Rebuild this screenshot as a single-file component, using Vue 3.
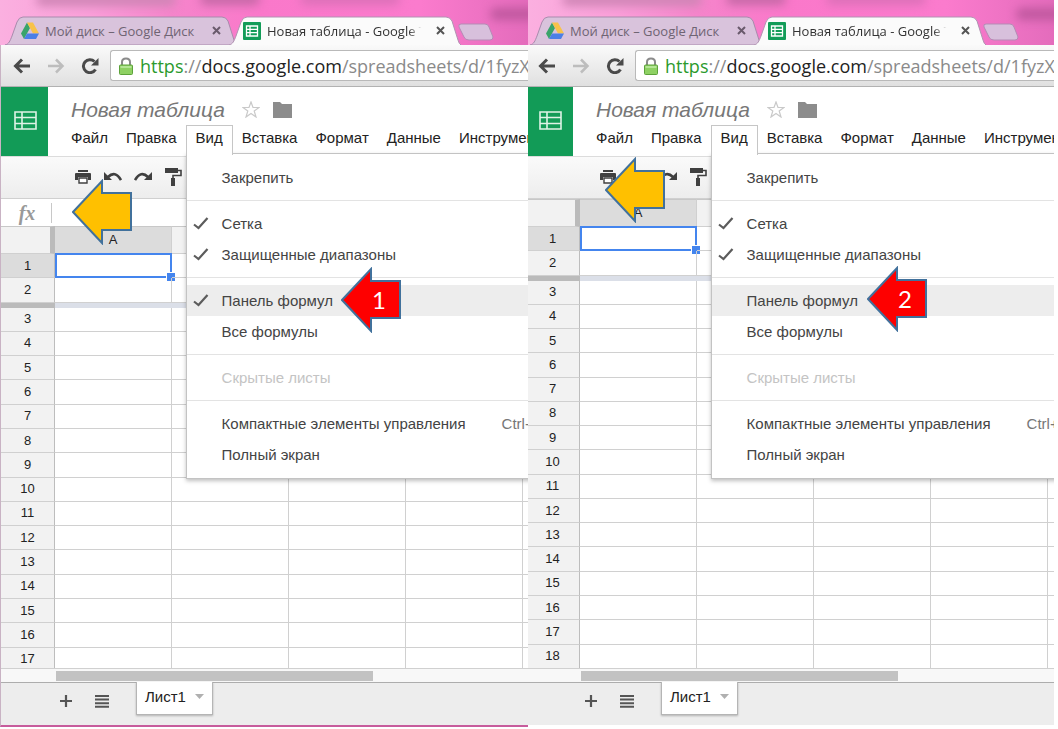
<script setup>
const menusBefore = ['Файл', 'Правка']
const menusAfter = ['Вставка', 'Формат', 'Данные', 'Инструменты']
const columns = ['A', 'B', 'C', 'D', 'E']

const viewMenu = (formulaBar) => [
  { label: 'Закрепить' },
  { separator: true },
  { label: 'Сетка', checked: true },
  { label: 'Защищенные диапазоны', checked: true },
  { separator: true },
  { label: 'Панель формул', checked: formulaBar, active: true },
  { label: 'Все формулы' },
  { separator: true },
  { label: 'Скрытые листы', disabled: true },
  { separator: true },
  { label: 'Компактные элементы управления', shortcut: 'Ctrl+Shift+F' },
  { label: 'Полный экран' },
]

const shots = [
  { step: 1, name: 'first', formulaBar: true, rows: 17, items: viewMenu(true) },
  { step: 2, name: 'second', formulaBar: false, rows: 18, items: viewMenu(false) },
]
</script>

<template>
  <main class="page">
    <section v-for="shot in shots" :key="shot.step" class="shot" :class="shot.name">
      <div class="window">
        <div class="tabstrip">
          <i class="blot b1"></i><i class="blot b2"></i><i class="blot b3"></i><i class="blot b4"></i>
          <div class="tab">
            <svg class="tab-shape" viewBox="0 0 232 29" preserveAspectRatio="none" aria-hidden="true">
              <path d="M0 29 C4 28 5 25 7 20 L12 6 Q14 1 18 1 H217 Q221 1 223 5 L229 24 Q230 28 232 29 Z" fill="#d9c3dc" stroke="#a98bad" />
            </svg>
            <svg class="fav" viewBox="0 0 18 17" aria-hidden="true">
              <path d="M6 0 L0 11 L3 16.500 L9 5.500 Z" fill="#3aa46a" />
              <path d="M6 0 H12 L18 11 H12 Z" fill="#f8c24a" />
              <path d="M6 11 H18 L15 16.500 H3 Z" fill="#4c7fe6" />
            </svg>
            <span class="tab-title">Мой диск – Google Диск</span>
            <button class="close" aria-label="Закрыть вкладку Мой диск">
              <svg viewBox="0 0 9 9"><path d="M1 1 L8 8 M8 1 L1 8" stroke="#6a5a6c" stroke-width="2" /></svg>
            </button>
          </div>
          <div class="tab current">
            <svg class="tab-shape" viewBox="0 0 232 29" preserveAspectRatio="none" aria-hidden="true">
              <path d="M0 29 C4 28 5 25 7 20 L12 6 Q14 1 18 1 H217 Q221 1 223 5 L229 24 Q230 28 232 29 Z" fill="#fbfbfb" />
              <path d="M0 29 C4 28 5 25 7 20 L12 6 Q14 1 18 1 H217 Q221 1 223 5 L229 24 Q230 28 232 29" fill="none" stroke="#b193b2" />
            </svg>
            <svg class="fav" viewBox="0 0 18 18" aria-hidden="true">
              <rect width="18" height="18" rx="1" fill="#129c58" />
              <path d="M3.500 4 H14.500 V14 H3.500 Z M3.500 7.300 H14.500 M3.500 10.600 H14.500 M7 4 V14" fill="none" stroke="#fff" stroke-width="1.300" />
            </svg>
            <span class="tab-title">Новая таблица - Google Таблицы</span>
            <button class="close" aria-label="Закрыть вкладку Новая таблица">
              <svg viewBox="0 0 9 9"><path d="M1 1 L8 8 M8 1 L1 8" stroke="#555" stroke-width="2" /></svg>
            </button>
          </div>
          <button class="new-tab" aria-label="Новая вкладка">
            <svg viewBox="0 0 38 18"><path d="M4 1 H28 Q31 1 32 4 L36 14 Q36 17 33 17 H12 Q8 17 7 14 L2 4 Q1 1 4 1 Z" fill="#d8c0dc" stroke="#b58bb5" /></svg>
          </button>
        </div>

        <div class="navbar">
          <button class="nav" aria-label="Назад">
            <svg viewBox="0 0 18 16"><path d="M17 8 H3 M9 1.500 L2.500 8 L9 14.500" fill="none" stroke="#4a4a4a" stroke-width="3" /></svg>
          </button>
          <button class="nav" aria-label="Вперед">
            <svg viewBox="0 0 18 16"><path d="M1 8 H15 M9 1.500 L15.500 8 L9 14.500" fill="none" stroke="#bdbdbd" stroke-width="2.500" /></svg>
          </button>
          <button class="nav" aria-label="Обновить">
            <svg viewBox="0 0 18 16"><path d="M14.500 11.500 A6.500 6.500 0 1 1 13.500 3.500" fill="none" stroke="#4a4a4a" stroke-width="3" /><path d="M17.500 0 V7.500 H10 Z" fill="#4a4a4a" /></svg>
          </button>
          <div class="address">
            <svg class="lock" viewBox="0 0 14 18" aria-hidden="true">
              <path d="M3 9 V5 Q3 1.500 7 1.500 Q11 1.500 11 5 V9" fill="none" stroke="#8b8b8b" stroke-width="2" />
              <rect x="0.500" y="8" width="13" height="9.500" rx="1" fill="#8ed163" stroke="#5da23b" />
              <path d="M1.500 10 H12.500" stroke="#b4e695" stroke-width="2" />
            </svg>
            <span class="url"><span class="secure">https</span>://<b>docs.google.com</b>/spreadsheets/d/1fyzXT</span>
          </div>
        </div>

        <header class="doc">
          <a class="home" href="#" aria-label="Главная страница Таблиц">
            <svg viewBox="0 0 23 19"><path d="M1 1 H22 V18 H1 Z M1 6.500 H22 M1 12.500 H22 M8 1 V18" fill="none" stroke="#dff3e6" stroke-width="1.600" /></svg>
          </a>
          <div class="doc-main">
            <div class="title-row">
              <h1>Новая таблица</h1>
              <button class="star" aria-label="Пометить">
                <svg viewBox="0 0 18 17"><path d="M9 1 L11 6.500 H17 L12.200 10 L14 16 L9 12.400 L4 16 L5.800 10 L1 6.500 H7 Z" fill="#fff" stroke="#c9c9c9" stroke-width="1.200" /></svg>
              </button>
              <button class="folder" aria-label="Переместить в папку">
                <svg viewBox="0 0 19 16"><path d="M0 0 H7 L9 2 H19 V16 H0 Z" fill="#8c8c8c" /></svg>
              </button>
            </div>
            <nav class="menubar">
              <button v-for="m in menusBefore" :key="m">{{ m }}</button>
              <div class="open-menu">
                <button class="open" aria-expanded="true">Вид</button>
                <div class="dropdown" role="menu">
                  <template v-for="(item, i) in shot.items" :key="i">
                    <hr v-if="item.separator" />
                    <button v-else role="menuitem" :class="{ active: item.active }" :disabled="item.disabled">
                      <span class="check">
                        <svg v-if="item.checked" viewBox="0 0 16 13"><path d="M1 7.500 L5.500 11 L14.500 1" fill="none" stroke="#5c5c5c" stroke-width="2.200" /></svg>
                      </span>
                      <span class="label">{{ item.label }}</span>
                      <span v-if="item.shortcut" class="shortcut">{{ item.shortcut }}</span>
                    </button>
                  </template>
                </div>
              </div>
              <button v-for="m in menusAfter" :key="m">{{ m }}</button>
            </nav>
          </div>
        </header>

        <div class="tools">
          <button aria-label="Печать">
            <svg viewBox="0 0 18 18"><path d="M4 2 H14 V4 H4 Z M2 5 H16 Q17 5 17 6 V12 H14 V9 H4 V12 H1 V6 Q1 5 2 5 Z" fill="#404040" /><path d="M5 10 H13 V15 H5 Z" fill="#fff" stroke="#404040" stroke-width="1.400" /></svg>
          </button>
          <button aria-label="Отменить">
            <svg viewBox="0 0 18 18"><path d="M4 9 Q11 2 17 12" fill="none" stroke="#404040" stroke-width="2.600" /><path d="M0 4 V12 H8 Z" fill="#404040" /></svg>
          </button>
          <button aria-label="Повторить">
            <svg viewBox="0 0 18 18"><path d="M14 9 Q7 2 1 12" fill="none" stroke="#404040" stroke-width="2.600" /><path d="M18 4 V12 H10 Z" fill="#404040" /></svg>
          </button>
          <button aria-label="Копировать форматирование">
            <svg viewBox="0 0 18 20"><path d="M1 1 H14 V6 H1 Z M7 11 H11 V19 H7 Z" fill="#404040" /><path d="M14 3.500 H17 V8.500 H9 V12" fill="none" stroke="#404040" stroke-width="1.600" /></svg>
          </button>
        </div>

        <div v-if="shot.formulaBar" class="formula">
          <label for="formula-input">fx</label>
          <input id="formula-input" type="text" />
        </div>

        <div class="grid">
          <table>
            <colgroup>
              <col class="col-head" />
              <col v-for="c in columns" :key="c" class="col-data" />
            </colgroup>
            <thead>
              <tr>
                <td class="corner"></td>
                <th v-for="c in columns" :key="c" scope="col" :class="{ sel: c === 'A' }">{{ c }}</th>
              </tr>
            </thead>
            <tbody>
              <template v-for="r in shot.rows" :key="r">
                <tr>
                  <th scope="row" :class="{ sel: r === 1 }">{{ r }}</th>
                  <td v-for="c in columns" :key="c">
                    <div v-if="r === 1 && c === 'A'" class="cursor"></div>
                  </td>
                </tr>
                <tr v-if="r === 2" class="freeze"><td></td><td :colspan="columns.length"></td></tr>
              </template>
            </tbody>
          </table>
        </div>
        <div class="scroll"><div class="thumb"></div></div>

        <footer>
          <button class="add" aria-label="Добавить лист">
            <svg viewBox="0 0 12 12"><path d="M6 0 V12 M0 6 H12" stroke="#555" stroke-width="2.200" /></svg>
          </button>
          <button class="all" aria-label="Все листы">
            <svg viewBox="0 0 14 13"><path d="M0 1 H14 M0 4.600 H14 M0 8.200 H14 M0 11.800 H14" stroke="#555" stroke-width="2" /></svg>
          </button>
          <button class="sheet">Лист1 <svg viewBox="0 0 9 5" aria-hidden="true"><path d="M0 0 H9 L4.500 5 Z" fill="#b0b0b0" /></svg></button>
        </footer>
      </div>

      <svg class="arrow pointer" viewBox="0 0 60 66" aria-hidden="true">
        <path d="M1 33 L30 2 V14 H59 V51 H30 V64 Z" fill="#ffc000" stroke="#41719c" stroke-width="2" />
      </svg>
      <div class="arrow step">
        <svg viewBox="0 0 60 66" aria-hidden="true">
          <path d="M1 33 L30 2 V14 H59 V51 H30 V64 Z" fill="#fe0000" stroke="#41719c" stroke-width="2" />
        </svg>
        <span>{{ shot.step }}</span>
      </div>
    </section>
  </main>
</template>

<style>
body {
  background: #fff;
}
</style>

<style scoped>
* {
  box-sizing: border-box;
}
.page {
  display: grid;
  grid-template-columns: 528fr 526fr;
  align-items: start;
  padding-right: 4px;
  font-family: "Liberation Sans", Arial, sans-serif;
  font-size: 15px;
  color: #222;
}
button {
  border: 0;
  padding: 0;
  background: none;
  font: inherit;
  color: inherit;
  flex: none;
}
svg {
  display: block;
}
.shot {
  position: relative;
  overflow: hidden;
}
.first .window {
  border-left: 1px solid #c9b3c4;
  border-bottom: 2px solid #c75c9c;
}
.second .window {
  margin-left: -2px;
}

/* Tab strip */
.tabstrip {
  position: relative;
  display: flex;
  align-items: flex-end;
  height: 45px;
  padding-left: 4px;
  overflow: hidden;
  background: linear-gradient(90deg, #fbb0e0 0, #fa9fd9 90px, #f585cb 170px, #fa78ca 260px, #fb7bcd 420px, #e46cbc 100%);
}
.first .tabstrip {
  margin-left: -1px;
  padding-left: 5px;
}
.blot {
  position: absolute;
  height: 12px;
  border-radius: 6px;
  filter: blur(5px);
}
.b1 { left: 36px; top: -6px; width: 140px; background: #cf85b5; }
.b2 { left: 200px; top: -7px; width: 60px; background: #c568a6; }
.b3 { left: 300px; top: -7px; width: 100px; background: #dc70b8; }
.b4 { left: 490px; top: 8px; width: 50px; background: #c0589f; }
.tab {
  position: relative;
  display: flex;
  align-items: center;
  width: 232px;
  height: 29px;
  flex: none;
  padding: 0 16px;
  font: 13px "Open Sans", "Noto Sans", sans-serif;
  color: #6f6473;
}
.tab.current {
  margin-left: -8px;
  padding-left: 14px;
  color: #333;
}
.tab-shape {
  position: absolute;
  inset: 0;
  width: 100%;
  height: 100%;
}
.fav {
  position: relative;
  width: 18px;
  height: 18px;
  flex: none;
}
.tab-title {
  position: relative;
  flex: 1;
  margin-left: 6px;
  overflow: hidden;
  white-space: nowrap;
}
.current .tab-title {
  mask-image: linear-gradient(90deg, #000 88%, transparent 96%);
}
.close {
  position: relative;
  margin-left: 8px;
}
.close svg {
  width: 9px;
  height: 9px;
}
.new-tab {
  margin: 0 0 4px -4px;
  position: relative;
}
.new-tab svg {
  width: 38px;
  height: 18px;
}

/* Navigation bar */
.navbar {
  display: flex;
  align-items: center;
  gap: 16px;
  height: 42px;
  padding-left: 12px;
  background: linear-gradient(#fafafa, #e0e0e0);
  border-bottom: 1px solid #b2b2b2;
}
.nav svg {
  width: 18px;
  height: 16px;
}
.address {
  display: flex;
  align-items: center;
  flex: 1;
  min-width: 0;
  height: 31px;
  margin-left: -5px;
  padding-left: 8px;
  gap: 7px;
  border: 1px solid #b9b9b9;
  border-right: 0;
  border-radius: 3px 0 0 3px;
  background: #fff;
  overflow: hidden;
}
.lock {
  width: 14px;
  height: 18px;
  flex: none;
}
.url {
  font: 18px "Open Sans", "Noto Sans", sans-serif;
  color: #8a8a8a;
  white-space: nowrap;
}
.url b {
  font-weight: 400;
  color: #222;
}
.secure {
  color: #2c9a2c;
}

/* Document header */
.doc {
  display: flex;
  height: 70px;
  background: #fff;
  border-bottom: 1px solid #dcdcdc;
}
.home {
  width: 47px;
  flex: none;
  padding: 24px 0 0 13px;
  background: #129b57;
}
.home svg {
  width: 23px;
  height: 19px;
}
.doc-main {
  flex: 1;
  min-width: 0;
  padding-top: 10px;
}
.title-row {
  display: flex;
  align-items: center;
  height: 25px;
  padding-left: 23px;
}
h1 {
  margin: 0 17px 0 0;
  font-size: 21px;
  font-weight: 400;
  font-style: italic;
  color: #777;
  white-space: nowrap;
}
.star svg {
  width: 18px;
  height: 17px;
}
.folder {
  margin-left: 13px;
}
.folder svg {
  width: 19px;
  height: 16px;
}
.menubar {
  display: flex;
  margin-top: 3px;
  padding-left: 14px;
}
.menubar > button,
.open {
  height: 28px;
  padding: 0 9px 3px;
  border: 1px solid transparent;
  border-width: 1px 0;
}
.open-menu {
  position: relative;
}
.open {
  position: relative;
  z-index: 4;
  height: 30px;
  border: 1px solid #c6c6c6;
  border-bottom: 0;
  padding-bottom: 6px;
  background: #fff;
}
.dropdown {
  position: absolute;
  z-index: 3;
  top: 28px;
  left: 0;
  width: max-content;
  padding: 8px 0;
  background: #fff;
  border: 1px solid #c3c3c3;
  box-shadow: 0 2px 4px rgba(0, 0, 0, 0.25);
}
.dropdown button {
  display: flex;
  align-items: center;
  width: 100%;
  height: 31px;
  padding: 0 20px 1px 0;
  color: #444;
}
.dropdown .active {
  background: #ededed;
}
.dropdown button:disabled {
  color: #c4c4c4;
}
.dropdown hr {
  margin: 7px 0;
  border: 0;
  border-top: 1px solid #e3e3e3;
}
.check {
  width: 35px;
  padding-left: 6px;
}
.check svg {
  width: 16px;
  height: 13px;
}
.shortcut {
  margin-left: auto;
  padding-left: 36px;
  color: #777;
}

/* Toolbar and formula bar */
.tools {
  display: flex;
  align-items: center;
  gap: 12px;
  height: 42px;
  padding: 0 0 2px 73px;
  background: linear-gradient(#fafafa, #ededed);
  border-bottom: 1px solid #d0d0d0;
}
.tools svg {
  width: 18px;
  height: 20px;
}
.formula {
  display: flex;
  align-items: center;
  height: 27px;
  background: #fff;
}
.formula label {
  width: 50px;
  padding-left: 2px;
  text-align: center;
  font: italic 700 20px/20px "Liberation Serif", serif;
  color: #999;
}
.formula input {
  flex: 1;
  min-width: 0;
  height: 20px;
  border: 0;
  border-left: 1px solid #c8c8c8;
}

/* Cells */
.grid {
  overflow: hidden;
  height: 442px;
  background: #fff;
}
.second .grid {
  height: 469px;
}
table {
  width: 639px;
  height: 446px;
  table-layout: fixed;
  border-collapse: separate;
  border-spacing: 0;
}
.second table {
  height: 470px;
}
.col-head {
  width: 54px;
}
.col-data {
  width: 117px;
}
th,
td {
  padding: 0;
  border-right: 1px solid #d0d0d0;
  border-bottom: 1px solid #d0d0d0;
  font-size: 13px;
  font-weight: 400;
  line-height: 16px;
}
th {
  background: #f2f2f2;
}
tbody th {
  border-right-color: #bdbdbd;
}
thead tr {
  height: 28px;
}
thead th,
.corner {
  border-top: 1px solid #c8c8c8;
}
.corner {
  background: #f2f2f2;
  border-right: 5px solid #bbb;
}
th.sel {
  background: #dcdcdc;
}
td {
  position: relative;
}
.cursor {
  position: absolute;
  inset: -1px -1px -1px 0;
  border: 2px solid #4485ee;
}
.cursor::after {
  content: "";
  position: absolute;
  right: -5px;
  bottom: -5px;
  width: 8px;
  height: 8px;
  background: #4485ee;
  border: 1px solid #fff;
  border-width: 1px 0 0 1px;
}
.freeze {
  height: 5px;
}
.freeze td {
  border: 0;
  background: #dbdfe8;
  line-height: 0;
}
.freeze td:first-child {
  background: #bbb;
}

/* Horizontal scrollbar and sheet tabs */
.scroll {
  height: 14px;
  padding: 2px 0 2px 55px;
  background: #f8f8f8;
  border-top: 1px solid #d0d0d0;
}
.thumb {
  width: 317px;
  height: 10px;
  background: #c2c2c2;
}
footer {
  display: flex;
  align-items: flex-start;
  height: 43px;
  padding-left: 59px;
  background: #ededed;
  border-top: 1px solid #adadad;
}
.add svg {
  width: 12px;
  height: 12px;
  margin-top: 12px;
}
.all svg {
  width: 14px;
  height: 13px;
  margin: 12px 27px 0 23px;
}
.sheet {
  display: flex;
  align-items: center;
  gap: 9px;
  height: 33px;
  margin-top: -1px;
  padding: 0 8px 3px;
  background: #fff;
  border: 1px solid #b5b5b5;
  border-top: 0;
  box-shadow: 0 1px 2px rgba(0, 0, 0, 0.25);
}
.sheet svg {
  width: 9px;
  height: 5px;
}

/* Annotation arrows */
.arrow {
  position: absolute;
  z-index: 5;
  width: 60px;
  height: 66px;
}
.first .pointer { left: 72px; top: 179px; }
.second .pointer { left: 77px; top: 157px; }
.first .step { left: 341px; top: 267px; }
.second .step { left: 339px; top: 266px; }
.step span {
  position: absolute;
  inset: 14px 1px 15px 17px;
  display: flex;
  align-items: center;
  justify-content: center;
  font: 24px Lato, sans-serif;
  color: #fff;
}
</style>
